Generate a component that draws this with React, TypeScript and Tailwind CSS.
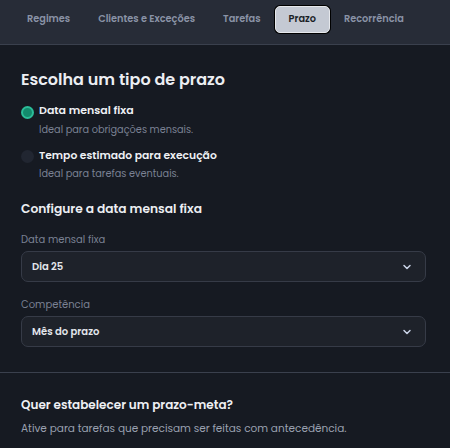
import React from "react";

function Chevron() {
  return (
    <svg width="12" height="12" viewBox="0 0 24 24" fill="none" stroke="#c9d3e6" strokeWidth="3" strokeLinecap="round" strokeLinejoin="round">
      <path d="M6 9l6 6 6-6" />
    </svg>
  );
}

function Select({ value }: { value: string }) {
  return (
    <div className="flex h-[31px] items-center justify-between rounded-[7px] border border-[#363b47] bg-[#1e222a] pl-[10px] pr-[12px]">
      <span className="text-[10px] font-semibold text-[#e3e6ec]">{value}</span>
      <Chevron />
    </div>
  );
}

export default function App() {
  const tabs = ["Regimes", "Clientes e Exceções", "Tarefas", "Prazo", "Recorrência"];
  return (
    <div className="h-[448px] w-[450px] overflow-hidden bg-[#161a22]" style={{ fontFamily: "Poppins, Inter, 'Noto Sans', sans-serif" }}>
      <div className="flex h-[45px] items-start border-b border-[#3a404d] bg-[#272c37] pl-[13px] pt-[6px]">
        {tabs.map((t) =>
          t === "Prazo" ? (
            <div key={t} className="flex h-[27px] items-center rounded-[5px] border border-[#e6e8ec] bg-[#c4c9d3] px-[13px] text-[9.75px] font-semibold text-[#1b1f27] shadow-[0_0_0_1px_#000]">
              {t}
            </div>
          ) : (
            <div key={t} className="flex h-[27px] items-center px-[14px] text-[9.75px] font-semibold text-[#8a93a6]">
              {t}
            </div>
          )
        )}
      </div>

      <div className="px-[21px] pt-[24px]">
        <h1 className="text-[16px] font-semibold leading-[22px] text-[#eceef2]">Escolha um tipo de prazo</h1>

        <div className="mt-[12px] flex flex-col gap-[8px]">
          <div className="flex gap-[5px]">
            <div className="mt-[3px] h-[13px] w-[13px] shrink-0 rounded-full border-2 border-[#2cbc98] bg-[#138a6c]" />
            <div>
              <div className="text-[11px] font-semibold leading-[15px] text-[#eef0f4]">Data mensal fixa</div>
              <div className="mt-[3px] text-[9.75px] leading-[18px] text-[#7a8193]">Ideal para obrigações mensais.</div>
            </div>
          </div>
          <div className="flex gap-[5px]">
            <div className="mt-[3px] h-[13px] w-[13px] shrink-0 rounded-full bg-[#212631]" />
            <div>
              <div className="mt-[1px] text-[10.75px] font-semibold leading-[15px] text-[#eef0f4]">Tempo estimado para execução</div>
              <div className="mt-[2px] text-[9.75px] leading-[18px] text-[#7a8193]">Ideal para tarefas eventuais.</div>
            </div>
          </div>
        </div>

        <h2 className="mt-[16px] text-[12.25px] font-semibold leading-[19px] text-[#eceef2]">Configure a data mensal fixa</h2>

        <div className="mt-[14px] text-[10px] leading-[16px] text-[#7a8193]">Data mensal fixa</div>
        <div className="mt-[3px] pr-[3px]">
          <Select value="Dia 25" />
        </div>

        <div className="mt-[15px] text-[10px] leading-[16px] text-[#7a8193]">Competência</div>
        <div className="mt-[3px] pr-[3px]">
          <Select value="Mês do prazo" />
        </div>
      </div>

      <div className="mt-[25px] border-t border-[#3a404d]" />

      <div className="px-[21px] pt-[23px]">
        <div className="text-[12px] font-semibold leading-[18px] text-[#eef0f4]">Quer estabelecer um prazo-meta?</div>
        <div className="mt-[7px] text-[10.5px] leading-[16px] text-[#9aa1b0]">Ative para tarefas que precisam ser feitas com antecedência.</div>
      </div>
    </div>
  );
}
